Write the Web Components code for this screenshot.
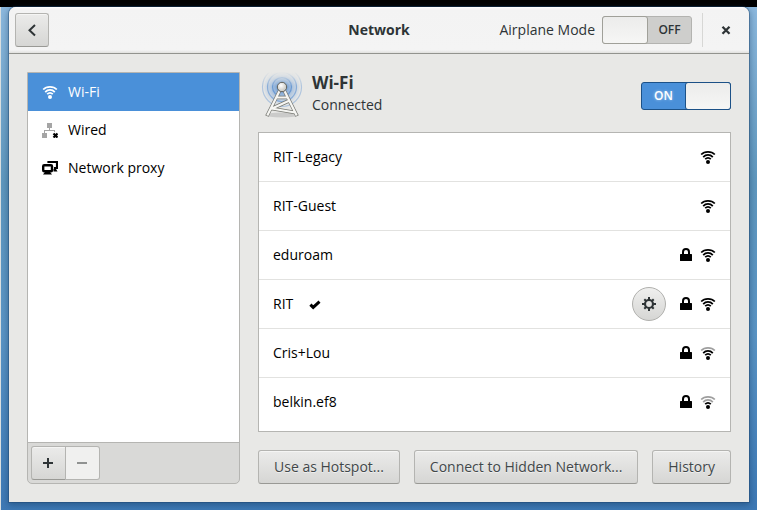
<!DOCTYPE html>
<html lang="en">
<head>
<meta charset="utf-8">
<title>Network</title>
<style>
html,body{margin:0;min-height:100%}
body{font:14px/20px "Open Sans","Noto Sans",sans-serif;color:#2e3436}
</style>
</head>
<body>
<desk-top>
  <settings-window>
    <header-bar slot="header" heading="Network"></header-bar>
    <connection-list slot="side">
      <connection-item icon="wifi" selected>Wi-Fi</connection-item>
      <connection-item icon="wired">Wired</connection-item>
      <connection-item icon="proxy">Network proxy</connection-item>
    </connection-list>
    <wifi-panel>
      <wifi-network name="RIT-Legacy" signal="3"></wifi-network>
      <wifi-network name="RIT-Guest" signal="3"></wifi-network>
      <wifi-network name="eduroam" signal="3" locked></wifi-network>
      <wifi-network name="RIT" signal="3" locked active></wifi-network>
      <wifi-network name="Cris+Lou" signal="2" locked></wifi-network>
      <wifi-network name="belkin.ef8" signal="1" locked></wifi-network>
      <push-button slot="actions">Use as Hotspot...</push-button>
      <push-button slot="actions">Connect to Hidden Network...</push-button>
      <push-button slot="actions">History</push-button>
    </wifi-panel>
  </settings-window>
</desk-top>
<script>
const svg = (body, size = 16, attrs = '') => `<svg width="${size}" height="${size}" viewBox="0 0 ${size} ${size}" aria-hidden="true" ${attrs}>${body}</svg>`;
const wifi = level => svg(`
  <g fill="none" stroke="currentColor" stroke-width="1.800">
    <path d="M1.200 5.500C4.600 1.900 11.400 1.900 14.800 5.500" opacity="${level > 2 ? 1 : .38}"/>
    <path d="M3.200 8.100C5.900 5.200 10.100 5.200 12.800 8.100" opacity="${level > 1 ? 1 : .38}"/>
    <path d="M5.200 10.200C6.800 8.700 9.200 8.700 10.800 10.200"/>
  </g><circle cx="8" cy="13" r="2" fill="currentColor"/>`);
const icons = {
  wifi: wifi(3),
  wired: svg(`<g fill="#a5a5a5"><path d="M5 1h5v5H5zM0 11h5v5H0z"/><path d="M7 6h1v2h5v2h-1V9H3v2H2V8h5z"/></g>
    <path d="M11.500 11.500l4 4m0-4l-4 4" stroke="#000" stroke-width="2.200"/>`),
  proxy: svg(`<path d="M6.500 3V2h8.500v6H12" fill="none" stroke="#000" stroke-width="2.200"/><path d="M11.500 9H14l1.500 2.500h-4z"/>
    <rect x="1.200" y="5.200" width="8.800" height="6" rx="1" fill="#fff" stroke="#000" stroke-width="2.400"/><path d="M3 12h5l2 2.500H1z"/>`),
  back: svg('<path d="M11 3L5.500 8.200 11 13.500" fill="none" stroke="currentColor" stroke-width="2"/>'),
  close: svg('<path d="M4.500 4.700l7 7m0-7l-7 7" fill="none" stroke="currentColor" stroke-width="2.300"/>'),
  plus: svg('<path d="M3 8h10M8 3v10" stroke="currentColor" stroke-width="2"/>'),
  minus: svg('<path d="M3 8h10" stroke="currentColor" stroke-width="2"/>'),
  lock: svg('<rect x="2" y="7" width="12" height="7" rx=".5"/><path d="M5 7.500V5c0-4 6-4 6 0v2.500" fill="none" stroke="#000" stroke-width="2"/>'),
  check: svg('<path d="M3.400 8.600l2.800 2.800 6.300-5.700" fill="none" stroke="#000" stroke-width="3"/>'),
  gear: svg(`<circle cx="8" cy="8" r="4" fill="none" stroke="currentColor" stroke-width="2.200"/>
    <path d="M8 1v3M8 12v3M1 8h3M12 8h3M3.300 3.300l2 2M10.700 10.700l2 2M12.700 3.300l-2 2M5.300 10.700l-2 2" stroke="currentColor" stroke-width="2"/>`),
  tower: svg(`<defs><radialGradient id="glow"><stop offset="0" stop-color="#2f78d0" stop-opacity=".85"/><stop offset=".5" stop-color="#4c88d0" stop-opacity=".45"/><stop offset="1" stop-color="#80abe0" stop-opacity=".1"/></radialGradient>
    <linearGradient id="fade" gradientUnits="userSpaceOnUse" x1="0" y1="0" x2="0" y2="14"><stop offset="0" stop-color="#000"/><stop offset="1" stop-color="#fff"/></linearGradient>
    <mask id="top"><rect width="48" height="48" fill="url(#fade)"/></mask>
    <radialGradient id="ball" cx=".4" cy=".35"><stop offset="0" stop-color="#fff"/><stop offset="1" stop-color="#d0d0cb"/></radialGradient></defs>
    <g mask="url(#top)"><circle cx="24" cy="15" r="18" fill="url(#glow)"/>
    <g fill="none" stroke="#5d91d1" stroke-width="1.200"><circle cx="24" cy="15" r="9.500" opacity=".8"/><circle cx="24" cy="15" r="14.500" opacity=".6"/><circle cx="24" cy="15" r="19.500" opacity=".4"/></g></g>
    <ellipse cx="24" cy="43" rx="17" ry="2.500" fill="#000" opacity=".12"/>
    <g fill="none" stroke="#777872" stroke-width="3.600"><path d="M21.500 19L9 44M26.500 19L39 44M18.500 25.500h11M14 36.500L30.500 29M13.500 36.500l23.500 4"/></g>
    <g fill="none" stroke="#f6f6f3" stroke-width="2.200"><path d="M21.500 19L9.300 43.500M26.500 19l12.200 24.500M18.500 25.500h11M14 36.500L30.500 29M13.500 36.500l23.500 4"/></g>
    <circle cx="24" cy="15" r="4.700" fill="url(#ball)" stroke="#60615c"/>`, 48)
};
const define = (name, css, html) => customElements.define(name, class extends HTMLElement {
  constructor() {
    super();
    this.attachShadow({ mode: 'open' }).innerHTML =
      `<style>*{box-sizing:border-box}svg{display:block;flex:none}button{font:inherit;color:inherit;margin:0}${css}</style>${html(this)}`;
  }
});
const raised = `border:1px solid #b4b4b1;border-bottom-color:#999995;background:linear-gradient(#ebebea,#d6d6d4);box-shadow:inset 0 1px #f5f5f4;`;

define('desk-top', `
  :host{display:flex;flex-direction:column;min-height:100vh;box-sizing:border-box;border-top:7px solid #000;
    background:linear-gradient(90deg,#d9dedf 1px,transparent 1px),linear-gradient(#8cb8dd,#5f97bd 35%,#5a94c4 65%,#3d78b4)}
  ::slotted(*){flex:1}`, () => '<slot></slot>');

define('settings-window', `
  :host{display:flex;flex-direction:column;margin:0 8px 8px 9px;border-radius:7px 7px 0 0;background:#e8e8e6;
    box-shadow:0 0 0 1px #1c446d66,0 2px 6px 1px #0b2d5066}
  main{flex:1;display:grid;grid-template-columns:minmax(160px,213fr) minmax(0,473fr);gap:18px;padding:18px}`,
  () => '<slot name="header"></slot><main><slot name="side"></slot><slot></slot></main>');

define('header-bar', `
  :host{display:grid;grid-template-columns:1fr auto 1fr;align-items:center;height:47px;box-sizing:border-box;padding:0 6px;
    background:linear-gradient(#fff 0,#f3f3f3 2px,#f4f4f4 43px,#e0e0de);border-bottom:1px solid #92938e;border-radius:7px 7px 0 0}
  h1{margin:0;font-size:14px;line-height:20px;font-weight:700}
  .end{display:flex;justify-content:flex-end;align-items:center}
  i{width:1px;height:34px;background:#d7d7d5;margin-left:10px}
  .close{border:0;background:none;padding:10px 9px 10px 15px}
  .back{${raised}display:block;width:34px;height:34px;padding:0 8px;border-radius:3px}`,
  el => `<div><button class="back" aria-label="Back">${icons.back}</button></div><h1>${el.getAttribute('heading')}</h1>
    <div class="end"><toggle-switch label="Airplane Mode"></toggle-switch><i></i><button class="close" aria-label="Close">${icons.close}</button></div>`);

define('toggle-switch', `
  :host{display:block}
  label{display:flex;align-items:center;gap:7px;white-space:nowrap}
  .track{display:flex;align-items:stretch;width:90px;height:28px;border:1px solid #b3b3b0;border-radius:3px;background:#cececc}
  .state{flex:1;text-align:center;font-size:12px;line-height:26px;font-weight:600}
  input{appearance:none;flex:none;width:46px;margin:-1px 0 -1px -1px;border:1px solid #a0a099;border-radius:3px;background:linear-gradient(#ececeb,#f6f6f5)}
  :host([on]) .track{flex-direction:row-reverse;background:#4a90d9;border-color:#1c5187}
  :host([on]) .state{color:#fff;text-shadow:0 0 3px #fff8}
  :host([on]) input{margin:-1px -1px -1px 0;border-color:#1c5187}`,
  el => `<label><span>${el.hasAttribute('quiet') ? '' : el.getAttribute('label')}</span><span class="track"><input type="checkbox" role="switch" aria-label="${el.getAttribute('label')}" ${el.hasAttribute('on') ? 'checked' : ''}><span class="state">${el.hasAttribute('on') ? 'ON' : 'OFF'}</span></span></label>`);

define('connection-list', `
  :host{display:flex;flex-direction:column;border:1px solid #b5b5b2;border-radius:0 0 5px 5px;background:#d9d9d7;overflow:hidden}
  nav{flex:1;background:#fff;border-bottom:1px solid #b5b5b2}
  .tools{display:flex;padding:3px}
  .tools button{${raised}width:35px;height:34px;padding:0 8px;border-radius:3px 0 0 3px}
  .tools button:last-child{width:34px;border-left:0;border-radius:0 3px 3px 0;color:#909291;background:#f0f0ef;border-color:#b4b4b1;box-shadow:none}`,
  () => `<nav><slot></slot></nav><div class="tools"><button aria-label="Add">${icons.plus}</button><button aria-label="Remove" disabled>${icons.minus}</button></div>`);

define('connection-item', `
  :host{display:block;color:#000}
  button{display:flex;align-items:center;gap:10px;width:100%;height:38px;padding:0 14px;border:0;background:none;text-align:left}
  :host([selected]) button{background:#4a90d9;color:#fff}`,
  el => `<button>${icons[el.getAttribute('icon')]}<span><slot></slot></span></button>`);

define('wifi-panel', `
  :host{display:flex;flex-direction:column}
  header{display:grid;grid-template-columns:48px 1fr auto;gap:6px;height:48px}
  toggle-switch{align-self:center}
  h2{margin:0;font-size:17px;line-height:22px;font-weight:700}
  p{margin:0;line-height:22px}
  section{flex:1;margin:12px 0 18px;border:1px solid #b5b5b2;background:#fff}
  footer{display:flex;justify-content:space-between;gap:8px}`,
  () => `<header>${icons.tower}<div><h2>Wi-Fi</h2><p>Connected</p></div><toggle-switch label="Wi-Fi" quiet on></toggle-switch></header>
    <section><slot></slot></section><footer><slot name="actions"></slot></footer>`);

define('wifi-network', `
  :host{display:flex;align-items:center;gap:6px;height:49px;box-sizing:border-box;padding:0 14px;border-bottom:1px solid #e2e2e0;color:#000}
  :host(:nth-child(6)){border-bottom-color:transparent}
  .name{display:flex;align-items:center;gap:14px;flex:1}
  button{display:grid;place-items:center;width:34px;height:34px;padding:0;margin-right:6px;border-radius:50%;border:1px solid #b0b0ad;color:#2e3436;background:linear-gradient(#efefee,#d6d6d4)}`,
  el => `<span class="name"><span>${el.getAttribute('name')}</span>${el.hasAttribute('active') ? icons.check : ''}</span>
    ${el.hasAttribute('active') ? `<button aria-label="Options">${icons.gear}</button>` : ''}${el.hasAttribute('locked') ? icons.lock : ''}${wifi(+el.getAttribute('signal'))}`);

define('push-button', `
  :host{display:block}
  button{${raised}height:34px;padding:0 15px;border-radius:3px;color:#414749;text-shadow:0 1px #fff8;white-space:nowrap}`,
  () => '<button><slot></slot></button>');
</script>
</body>
</html>
